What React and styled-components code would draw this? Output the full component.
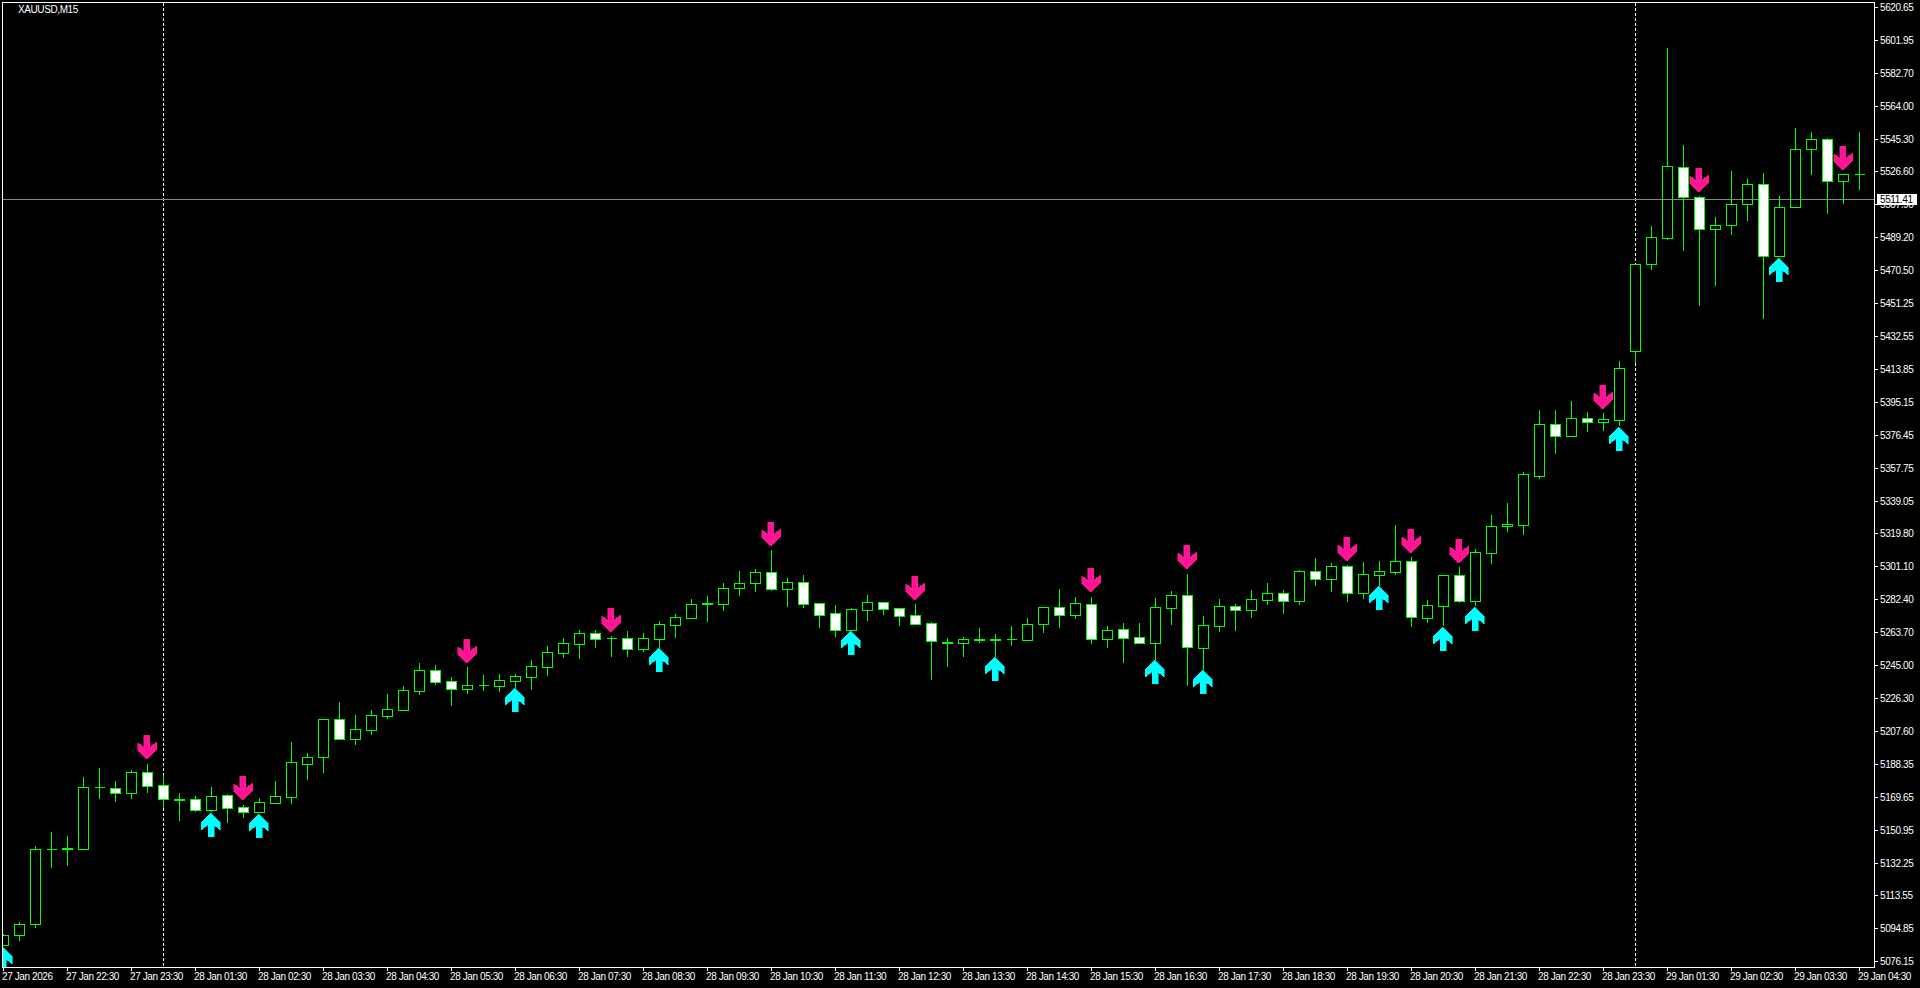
import styled, { createGlobalStyle } from 'styled-components'

const GlobalStyle = createGlobalStyle`
  html, body {
    margin: 0;
    padding: 0;
    background: #000;
    overflow: hidden;
  }
`

const BULL = '#00ff00'
const PLOT_X = 3
const PLOT_Y = 3
const PLOT_W = 1871
const PLOT_H = 964
const BAR_STEP = 16
const PRICE_LINE_Y = 199

// one row per bar: wick top, body top, body bottom, wick bottom, white body
const bars = [
  [934, 935, 945, 945, 0], [922, 924, 935, 940, 0], [846, 849, 924, 927, 0], [832, 849, 849, 867, 0],
  [836, 848, 849, 865, 0], [777, 787, 849, 849, 0], [768, 787, 787, 798, 0], [781, 788, 793, 801, 1],
  [770, 772, 793, 798, 0], [764, 772, 786, 792, 1], [775, 785, 799, 807, 1], [793, 799, 800, 820, 0],
  [796, 799, 810, 811, 1], [787, 796, 810, 811, 0], [794, 795, 808, 822, 1], [805, 807, 812, 817, 1],
  [798, 802, 812, 812, 0], [781, 796, 803, 803, 0], [742, 762, 797, 803, 0], [753, 757, 764, 779, 0],
  [719, 719, 757, 772, 0], [702, 719, 739, 739, 1], [715, 729, 739, 744, 0], [710, 715, 730, 734, 0],
  [694, 709, 716, 718, 0], [686, 690, 710, 710, 0], [663, 670, 691, 694, 0], [665, 670, 682, 684, 1],
  [677, 681, 689, 705, 1], [667, 685, 689, 693, 0], [675, 685, 685, 690, 0], [674, 680, 686, 691, 0],
  [674, 676, 681, 687, 0], [660, 666, 677, 689, 0], [646, 652, 667, 675, 0], [638, 643, 653, 657, 0],
  [630, 633, 644, 658, 0], [630, 633, 639, 647, 1], [636, 638, 638, 656, 0], [631, 638, 649, 656, 1],
  [633, 638, 649, 651, 0], [621, 624, 639, 647, 0], [614, 617, 625, 637, 0], [599, 604, 618, 618, 0],
  [596, 603, 604, 621, 0], [583, 588, 604, 610, 0], [571, 583, 588, 595, 0], [569, 572, 583, 591, 0],
  [550, 572, 589, 590, 1], [578, 582, 589, 606, 0], [575, 582, 604, 607, 1], [603, 603, 615, 627, 1],
  [605, 613, 630, 636, 1], [608, 609, 630, 630, 0], [595, 602, 610, 620, 0], [602, 602, 609, 614, 1],
  [608, 608, 616, 625, 1], [604, 615, 624, 624, 1], [622, 623, 641, 679, 1], [638, 642, 643, 666, 0],
  [637, 639, 643, 656, 0], [628, 639, 640, 642, 0], [634, 639, 640, 656, 0], [626, 639, 639, 645, 0],
  [618, 624, 640, 640, 0], [607, 607, 624, 632, 0], [589, 607, 615, 627, 1], [597, 603, 615, 618, 0],
  [597, 604, 639, 643, 1], [626, 630, 639, 647, 0], [623, 629, 638, 662, 1], [623, 637, 643, 643, 1],
  [598, 607, 643, 659, 0], [591, 595, 608, 624, 0], [574, 595, 647, 685, 1], [616, 625, 648, 669, 0],
  [599, 606, 626, 631, 0], [604, 606, 610, 630, 1], [590, 599, 610, 617, 0], [583, 593, 600, 604, 0],
  [590, 593, 601, 613, 1], [570, 571, 601, 604, 0], [558, 571, 579, 585, 1], [563, 566, 579, 591, 0],
  [565, 566, 593, 601, 1], [562, 574, 593, 598, 0], [561, 571, 575, 585, 0], [525, 561, 572, 574, 0],
  [557, 561, 617, 626, 1], [600, 605, 618, 622, 0], [575, 575, 606, 625, 0], [567, 575, 601, 602, 1],
  [549, 552, 601, 605, 0], [515, 526, 553, 563, 0], [503, 524, 526, 531, 0], [472, 474, 525, 534, 0],
  [410, 424, 476, 478, 0], [410, 424, 436, 453, 1], [401, 418, 436, 436, 0], [412, 418, 422, 431, 1],
  [413, 419, 422, 430, 0], [361, 368, 420, 425, 0], [264, 264, 351, 362, 0], [226, 237, 264, 269, 0],
  [48, 166, 238, 239, 0], [145, 167, 197, 250, 1], [196, 197, 229, 305, 1], [217, 225, 229, 285, 0],
  [171, 204, 225, 234, 0], [179, 184, 204, 220, 0], [173, 184, 256, 318, 1], [196, 207, 256, 256, 0],
  [128, 149, 207, 207, 0], [132, 139, 149, 174, 0], [138, 139, 181, 213, 1], [174, 174, 181, 203, 0],
  [132, 174, 174, 189, 0],
]

// bar index, y of the arrow's first row
const sellArrows = [
  [9, 735], [15, 776], [29, 639], [38, 608], [48, 522], [57, 576], [68, 568],
  [74, 545], [84, 537], [88, 529], [91, 539], [100, 385], [106, 168], [115, 146],
]
const buyArrows = [
  [0, 947], [13, 813], [16, 814], [32, 688], [41, 648], [53, 631], [62, 657], [72, 660],
  [75, 670], [86, 586], [90, 627], [92, 607], [101, 427], [111, 258],
]
const separators = [10, 102]

const prices = [
  '5620.65', '5601.95', '5582.70', '5564.00', '5545.30', '5526.60', '5507.90', '5489.20', '5470.50', '5451.25',
  '5432.55', '5413.85', '5395.15', '5376.45', '5357.75', '5339.05', '5319.80', '5301.10', '5282.40', '5263.70',
  '5245.00', '5226.30', '5207.60', '5188.35', '5169.65', '5150.95', '5132.25', '5113.55', '5094.85', '5076.15',
]

const times = [
  '27 Jan 2026', '27 Jan 22:30', '27 Jan 23:30',
  '28 Jan 01:30', '28 Jan 02:30', '28 Jan 03:30', '28 Jan 04:30', '28 Jan 05:30', '28 Jan 06:30',
  '28 Jan 07:30', '28 Jan 08:30', '28 Jan 09:30', '28 Jan 10:30', '28 Jan 11:30', '28 Jan 12:30',
  '28 Jan 13:30', '28 Jan 14:30', '28 Jan 15:30', '28 Jan 16:30', '28 Jan 17:30', '28 Jan 18:30',
  '28 Jan 19:30', '28 Jan 20:30', '28 Jan 21:30', '28 Jan 22:30', '28 Jan 23:30',
  '29 Jan 01:30', '29 Jan 02:30', '29 Jan 03:30', '29 Jan 04:30',
]

const Terminal = styled.div`
  display: grid;
  grid-template-columns: 1875px 45px;
  grid-template-rows: 968px 20px;
  width: 1920px;
  height: 988px;
  background: #000;
  color: #fff;
  font-family: "Liberation Sans", Arial, sans-serif;
  font-size: 10px;
  letter-spacing: -0.4px;
  overflow: hidden;
`

const PlotCell = styled.div`
  padding: 2px 0 0 2px;
`

const Plot = styled.div`
  position: relative;
  width: 1871px;
  height: 964px;
  border: 1px solid #fff;
`

const ChartSvg = styled.svg`
  display: block;
  shape-rendering: crispEdges;
`

const SymbolLabel = styled.div`
  position: absolute;
  left: 15px;
  top: 1px;
  line-height: 12px;
  white-space: nowrap;
`

const Separator = styled.line`
  stroke: #fff;
  stroke-width: 1;
  stroke-dasharray: 3 2;
`

const PriceLine = styled.line`
  stroke: #7f8994;
  stroke-width: 1;
`

const Wick = styled.line`
  stroke: ${BULL};
  stroke-width: 1;
`

const BodyFill = styled.rect`
  fill: ${(p) => (p.$white ? '#fff' : '#000')};
`

const BodyEdge = styled.path`
  fill: none;
  stroke: ${BULL};
  stroke-width: 1;
`

const ArrowFace = styled.polygon`
  fill: ${(p) => p.$color};
`

const PriceAxis = styled.div`
  position: relative;
  display: flex;
  flex-direction: column;
  gap: 20px;
  padding-top: 1px;
`

const PriceRow = styled.div`
  display: flex;
  align-items: center;
  height: 13px;
`

const PriceTick = styled.span`
  width: 3px;
  height: 1px;
  margin-right: 2px;
  background: #fff;
`

const LastPrice = styled.div`
  position: absolute;
  left: 2px;
  top: 194px;
  width: 37px;
  height: 11px;
  padding-left: 3px;
  background: #fff;
  color: #000;
  line-height: 11px;
`

const TimeAxis = styled.div`
  grid-column: 1 / -1;
  display: flex;
  padding-left: 3px;
`

const TimeCell = styled.div`
  flex: 0 0 64px;
  width: 64px;
`

const TimeTick = styled.div`
  width: 1px;
  height: 3px;
  background: #fff;
`

const TimeLabel = styled.div`
  margin-left: -1px;
  line-height: 12px;
  white-space: nowrap;
`

const barX = (i) => PLOT_X + BAR_STEP * i

function Arrow({ index, top, up }) {
  const cx = barX(index) + (up ? -0.5 : 0)
  const shape = up
    ? [[0, 0], [9.5, 9], [9.5, 17], [3, 12], [3, 24], [-3, 24], [-3, 12], [-9.5, 17], [-9.5, 9]]
    : [[-3, 0], [3, 0], [3, 12], [9.5, 7], [9.5, 15], [0, 24], [-9.5, 15], [-9.5, 7], [-3, 12]]
  const points = (dx) => shape.map(([x, y]) => `${cx + x + dx},${top + y}`).join(' ')
  return (
    <>
      <ArrowFace points={points(up ? 1 : -1)} $color={up ? '#008a8a' : '#7a1050'} />
      <ArrowFace points={points(0)} $color={up ? '#00ffff' : '#ff1493'} />
    </>
  )
}

function CandleChart() {
  return (
    <ChartSvg width={PLOT_W} height={PLOT_H} viewBox={`${PLOT_X} ${PLOT_Y} ${PLOT_W} ${PLOT_H}`}>
      {separators.map((i) => (
        <Separator key={i} x1={barX(i) + 0.5} x2={barX(i) + 0.5} y1={3} y2={967} />
      ))}
      {bars.map(([, top, bottom], i) => (
        <BodyFill key={i} x={barX(i) - 4} y={top + 1} width={9} height={Math.max(bottom - top - 1, 0)} />
      ))}
      <PriceLine x1={3} x2={1874} y1={PRICE_LINE_Y + 0.5} y2={PRICE_LINE_Y + 0.5} />
      {bars.map(([wickTop, top, bottom, wickBottom, white], i) => {
        const x = barX(i)
        return (
          <g key={i}>
            {wickTop < top && <Wick x1={x + 0.5} x2={x + 0.5} y1={wickTop} y2={top} />}
            {wickBottom > bottom && <Wick x1={x + 0.5} x2={x + 0.5} y1={bottom + 1} y2={wickBottom + 1} />}
            {white === 1 && <BodyFill $white x={x - 4} y={top + 1} width={9} height={Math.max(bottom - top - 1, 0)} />}
            <BodyEdge d={`M${x - 4.5} ${top + 0.5}H${x + 5.5}V${bottom + 0.5}H${x - 4.5}Z`} />
          </g>
        )
      })}
      {sellArrows.map(([index, top]) => (
        <Arrow key={index} index={index} top={top} />
      ))}
      {buyArrows.map(([index, top]) => (
        <Arrow key={index} index={index} top={top} up />
      ))}
    </ChartSvg>
  )
}

export default function App() {
  return (
    <>
      <GlobalStyle />
      <Terminal>
        <PlotCell>
          <Plot>
            <CandleChart />
            <SymbolLabel>XAUUSD,M15</SymbolLabel>
          </Plot>
        </PlotCell>
        <PriceAxis>
          {prices.map((price) => (
            <PriceRow key={price}>
              <PriceTick />
              {price}
            </PriceRow>
          ))}
          <LastPrice>5511.41</LastPrice>
        </PriceAxis>
        <TimeAxis>
          {times.map((time) => (
            <TimeCell key={time}>
              <TimeTick />
              <TimeLabel>{time}</TimeLabel>
            </TimeCell>
          ))}
        </TimeAxis>
      </Terminal>
    </>
  )
}
